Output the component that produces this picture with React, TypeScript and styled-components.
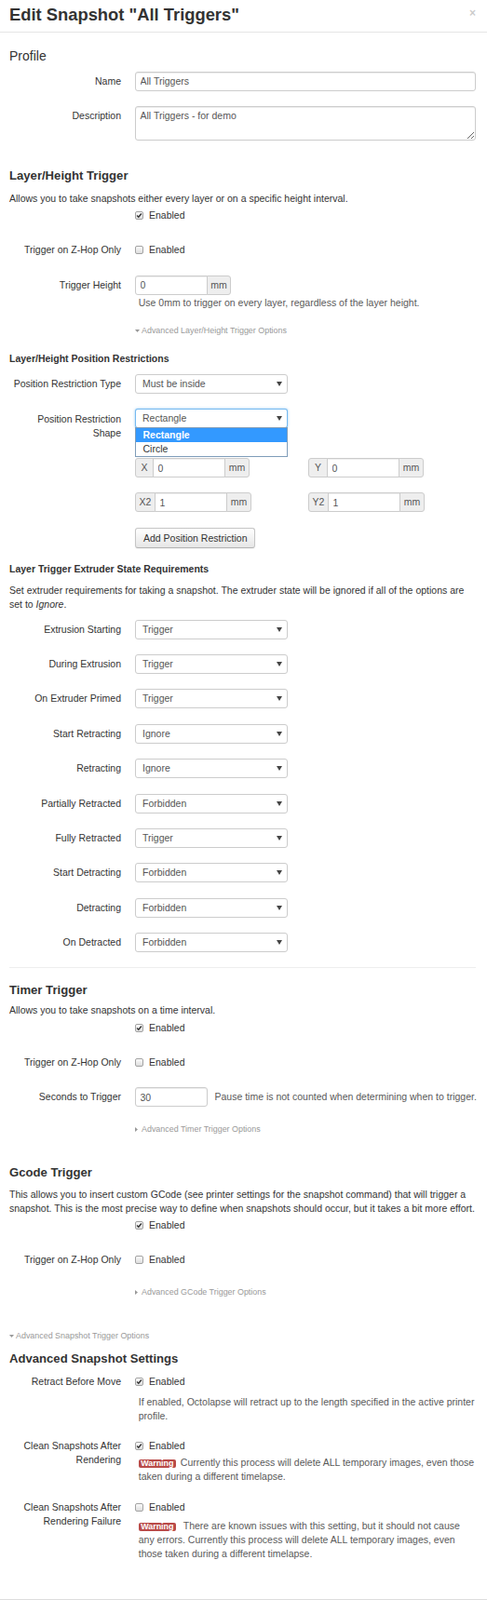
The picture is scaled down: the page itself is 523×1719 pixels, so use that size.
import React from "react";
import styled, { createGlobalStyle } from "styled-components";

const GlobalStyle = createGlobalStyle`
  html, body { margin: 0; padding: 0; background: #fff; }
  body {
    font-family: "Liberation Sans", Arial, Helvetica, sans-serif;
    font-size: 10.5px;
    line-height: 15px;
    color: #333;
  }
  * { box-sizing: border-box; }
`;

type MT = { $mt?: number };

const Modal = styled.div`
  width: 523px;
  background: #fff;
`;

const Header = styled.div`
  display: flex;
  align-items: flex-start;
  justify-content: space-between;
  padding: 4.75px 12px 6.75px 10px;
  border-bottom: 1px solid #e5e5e5;
`;

const Title = styled.h3`
  margin: 0;
  font-size: 18.375px;
  line-height: 22.5px;
  font-weight: bold;
  color: #333;
`;

const Close = styled.span`
  font-size: 12px;
  font-weight: bold;
  line-height: 18px;
  color: #000;
  opacity: 0.2;
`;

const Body = styled.div`
  display: flex;
  flex-direction: column;
  padding: 0 12px 41.2px 10px;
`;

const Footer = styled.div`
  height: 40px;
  border-top: 1px solid #ddd;
  background: #f5f5f5;
`;

const SectionTitle = styled.h4<MT & { $plain?: boolean }>`
  margin: ${(p) => p.$mt ?? 0}px 0 0;
  font-size: ${(p) => (p.$plain ? 14 : 13.125)}px;
  font-weight: ${(p) => (p.$plain ? "normal" : "bold")};
  line-height: 15px;
  color: #333;
`;

const SubTitle = styled.h5<MT>`
  margin: ${(p) => p.$mt ?? 0}px 0 0;
  font-size: 10.5px;
  font-weight: bold;
  line-height: 15px;
  color: #333;
`;

const Para = styled.p<MT>`
  margin: ${(p) => p.$mt ?? 0}px 0 0;
  white-space: nowrap;
`;

const Rule = styled.hr<MT>`
  margin: ${(p) => p.$mt ?? 0}px 0 0;
  border: 0;
  border-top: 1px solid #eee;
  height: 0;
`;

const Row = styled.div<MT>`
  display: flex;
  align-items: flex-start;
  margin-top: ${(p) => p.$mt ?? 0}px;
`;

const Label = styled.label<{ $pt?: number }>`
  width: 120px;
  flex-shrink: 0;
  text-align: right;
  padding-top: ${(p) => p.$pt ?? 0}px;
  color: #333;
`;

const Controls = styled.div<{ $inline?: boolean }>`
  margin-left: 15px;
  flex: 1;
  min-width: 0;
  display: ${(p) => (p.$inline ? "flex" : "block")};
  align-items: center;
`;

const Field = styled.input<{ $w?: string; $radius?: string }>`
  display: block;
  width: ${(p) => p.$w ?? "100%"};
  height: 21px;
  padding: 0 4.5px;
  margin: 0;
  font: inherit;
  color: #555;
  background: #fff;
  border: 1px solid #ccc;
  border-radius: ${(p) => p.$radius ?? "3px"};
  box-shadow: inset 0 1px 1px rgba(0, 0, 0, 0.075);
  outline: none;
`;

const Area = styled.textarea`
  display: block;
  width: 100%;
  height: 37px;
  padding: 2px 4.5px;
  margin: 0;
  font: inherit;
  line-height: 15px;
  color: #555;
  border: 1px solid #ccc;
  border-radius: 3px;
  box-shadow: inset 0 1px 1px rgba(0, 0, 0, 0.075);
  outline: none;
`;

const Group = styled.div`
  display: flex;
  width: max-content;
`;

const Addon = styled.span<{ $w: number; $side: "left" | "right" }>`
  position: relative;
  z-index: 1;
  width: ${(p) => p.$w}px;
  height: 21px;
  line-height: 19px;
  text-align: center;
  color: #555;
  background: #eee;
  border: 1px solid #ccc;
  border-radius: ${(p) => (p.$side === "left" ? "3px 0 0 3px" : "0 3px 3px 0")};
  ${(p) => (p.$side === "left" ? "margin-right: -1px;" : "margin-left: -1px;")}
`;

const PairGrid = styled.div`
  display: grid;
  grid-template-columns: 186px auto;
`;

const SelectBox = styled.div<{ $focus?: boolean }>`
  position: relative;
  width: 164px;
  height: 21px;
  display: flex;
  align-items: center;
  justify-content: space-between;
  padding: 0 5px 0 7px;
  color: #555;
  background: #fff;
  border: 1px solid ${(p) => (p.$focus ? "rgba(82,168,236,0.8)" : "#ccc")};
  border-radius: 3px;
  box-shadow: ${(p) => (p.$focus ? "0 0 3px rgba(82,168,236,0.6)" : "none")};
`;

const DropList = styled.ul`
  position: absolute;
  top: calc(100% + 0px);
  left: -1px;
  width: 164px;
  margin: 0;
  padding: 0;
  list-style: none;
  background: #fff;
  border: 1px solid #7f9db9;
  z-index: 5;
`;

const DropItem = styled.li<{ $active?: boolean }>`
  height: 14.6px;
  line-height: 14.6px;
  padding-left: 7.5px;
  font-size: 10.5px;
  font-weight: ${(p) => (p.$active ? "bold" : "normal")};
  color: ${(p) => (p.$active ? "#fff" : "#333")};
  background: ${(p) => (p.$active ? "#3399ff" : "#fff")};
`;

const CheckLine = styled.div`
  display: flex;
  align-items: center;
  height: 15px;
  gap: 6px;
  color: #333;
`;

const Box = styled.span`
  display: inline-flex;
  align-items: center;
  justify-content: center;
  width: 9px;
  height: 9px;
  border: 1px solid #a3a3a3;
  border-radius: 2px;
  background: linear-gradient(#fafafa, #dedede);
`;

const Help = styled.div<MT & { $nowrap?: boolean }>`
  margin-top: ${(p) => p.$mt ?? 0}px;
  padding-left: 3.75px;
  color: #595959;
  white-space: nowrap;
`;

const HelpInline = styled.span`
  margin-left: 7.5px;
  color: #595959;
  white-space: nowrap;
`;

const Warn = styled.span`
  display: inline-block;
  background: #b94a48;
  color: #fff;
  font-weight: bold;
  font-size: 8.9px;
  line-height: 9.5px;
  padding: 0 2.5px;
  border-radius: 2px;
  margin-right: 2px;
`;

const Toggle = styled.div<MT & { $indent?: boolean }>`
  display: flex;
  align-items: center;
  height: 15px;
  margin-top: ${(p) => p.$mt ?? 0}px;
  margin-left: ${(p) => (p.$indent ? 135 : 0)}px;
  font-size: 8.925px;
  color: #999;
  svg {
    margin-right: 2px;
  }
`;

const Button = styled.button`
  display: block;
  height: 21.5px;
  padding: 0 8px;
  margin: 0;
  font: inherit;
  color: #333;
  background: linear-gradient(#ffffff, #e6e6e6);
  border: 1px solid #c5c5c5;
  border-bottom-color: #b3b3b3;
  border-radius: 3px;
  box-shadow: inset 0 1px 0 rgba(255, 255, 255, 0.2), 0 1px 2px rgba(0, 0, 0, 0.05);
`;

const Arrow = () => (
  <svg width="6" height="5" viewBox="0 0 6 5">
    <polygon points="0,0 6,0 3,5" fill="#444" />
  </svg>
);

const Select = ({ value, focus, children }: { value: string; focus?: boolean; children?: React.ReactNode }) => (
  <SelectBox $focus={focus}>
    <span>{value}</span>
    <Arrow />
    {children}
  </SelectBox>
);

const Checkbox = ({ on }: { on?: boolean }) => (
  <CheckLine>
    <Box>
      {on && (
        <svg width="7" height="7" viewBox="0 0 7 7">
          <path d="M1.1 3.6 L2.8 5.3 L5.9 1.5" fill="none" stroke="#333" strokeWidth="1.4" />
        </svg>
      )}
    </Box>
    <span>Enabled</span>
  </CheckLine>
);

const AdvToggle = ({ open, text, indent, mt }: { open?: boolean; text: string; indent?: boolean; mt: number }) => (
  <Toggle $mt={mt} $indent={indent}>
    {open ? (
      <svg width="5" height="3" viewBox="0 0 5 3">
        <polygon points="0,0 5,0 2.5,3" fill="#999" />
      </svg>
    ) : (
      <svg width="5" height="5" viewBox="0 0 5 5">
        <polygon points="0,0 3,2.5 0,5" fill="#999" />
      </svg>
    )}
    <span>{text}</span>
  </Toggle>
);

const extruder: [string, string][] = [
  ["Extrusion Starting", "Trigger"],
  ["During Extrusion", "Trigger"],
  ["On Extruder Primed", "Trigger"],
  ["Start Retracting", "Ignore"],
  ["Retracting", "Ignore"],
  ["Partially Retracted", "Forbidden"],
  ["Fully Retracted", "Trigger"],
  ["Start Detracting", "Forbidden"],
  ["Detracting", "Forbidden"],
  ["On Detracted", "Forbidden"],
];

const CoordGroup = ({ axis, value, w }: { axis: string; value: string; w: number }) => (
  <Group>
    <Addon $w={w} $side="left">{axis}</Addon>
    <Field $w="78px" $radius="0" defaultValue={value} />
    <Addon $w={27} $side="right">mm</Addon>
  </Group>
);

export default function App() {
  return (
    <Modal>
      <GlobalStyle />
      <Header>
        <Title>Edit Snapshot "All Triggers"</Title>
        <Close>×</Close>
      </Header>
      <Body>
        <SectionTitle $plain $mt={17.5}>Profile</SectionTitle>
        <Row $mt={9}>
          <Label $pt={3}>Name</Label>
          <Controls>
            <Field defaultValue="All Triggers" />
          </Controls>
        </Row>
        <Row $mt={16}>
          <Label $pt={3}>Description</Label>
          <Controls>
            <Area defaultValue="All Triggers - for demo" />
          </Controls>
        </Row>

        <SectionTitle $mt={30}>Layer/Height Trigger</SectionTitle>
        <Para $mt={10}>Allows you to take snapshots either every layer or on a specific height interval.</Para>
        <Row $mt={3.7}>
          <Label />
          <Controls>
            <Checkbox on />
          </Controls>
        </Row>
        <Row $mt={21.6}>
          <Label>Trigger on Z-Hop Only</Label>
          <Controls>
            <Checkbox />
          </Controls>
        </Row>
        <Row $mt={20.2}>
          <Label $pt={3}>Trigger Height</Label>
          <Controls>
            <Group>
              <Field $w="78px" $radius="3px 0 0 3px" defaultValue="0" />
              <Addon $w={26} $side="right">mm</Addon>
            </Group>
            <Help $mt={1.2}>Use 0mm to trigger on every layer, regardless of the layer height.</Help>
          </Controls>
        </Row>
        <AdvToggle open indent mt={15} text="Advanced Layer/Height Trigger Options" />

        <SubTitle $mt={15.3}>Layer/Height Position Restrictions</SubTitle>
        <Row $mt={9}>
          <Label $pt={3}>Position Restriction Type</Label>
          <Controls>
            <Select value="Must be inside" />
          </Controls>
        </Row>
        <Row $mt={16}>
          <Label $pt={3.75}>
            Position Restriction
            <br />
            Shape
          </Label>
          <Controls>
            <Select value="Rectangle" focus>
              <DropList>
                <DropItem $active>Rectangle</DropItem>
                <DropItem>Circle</DropItem>
              </DropList>
            </Select>
          </Controls>
        </Row>
        <Row $mt={19.25}>
          <Label />
          <Controls>
            <PairGrid>
              <CoordGroup axis="X" value="0" w={20} />
              <CoordGroup axis="Y" value="0" w={21} />
            </PairGrid>
          </Controls>
        </Row>
        <Row $mt={16}>
          <Label />
          <Controls>
            <PairGrid>
              <CoordGroup axis="X2" value="1" w={22} />
              <CoordGroup axis="Y2" value="1" w={22} />
            </PairGrid>
          </Controls>
        </Row>
        <Row $mt={17}>
          <Label />
          <Controls>
            <Button type="button">Add Position Restriction</Button>
          </Controls>
        </Row>

        <SubTitle $mt={15.2}>Layer Trigger Extruder State Requirements</SubTitle>
        <Para $mt={7.6}>
          Set extruder requirements for taking a snapshot. The extruder state will be ignored if all of the options are
          <br />
          set to <em>Ignore</em>.
        </Para>
        {extruder.map(([label, value], i) => (
          <Row key={label} $mt={i === 0 ? 8.9 : 16.4}>
            <Label $pt={3}>{label}</Label>
            <Controls>
              <Select value={value} />
            </Controls>
          </Row>
        ))}

        <Rule $mt={15.7} />

        <SectionTitle $mt={15.8}>Timer Trigger</SectionTitle>
        <Para $mt={7.7}>Allows you to take snapshots on a time interval.</Para>
        <Row $mt={3.3}>
          <Label />
          <Controls>
            <Checkbox on />
          </Controls>
        </Row>
        <Row $mt={22.7}>
          <Label>Trigger on Z-Hop Only</Label>
          <Controls>
            <Checkbox />
          </Controls>
        </Row>
        <Row $mt={19}>
          <Label $pt={3}>Seconds to Trigger</Label>
          <Controls $inline>
            <Field $w="78px" defaultValue="30" />
            <HelpInline>Pause time is not counted when determining when to trigger.</HelpInline>
          </Controls>
        </Row>
        <AdvToggle indent mt={16.3} text="Advanced Timer Trigger Options" />

        <SectionTitle $mt={31.7}>Gcode Trigger</SectionTitle>
        <Para $mt={8.3}>
          This allows you to insert custom GCode (see printer settings for the snapshot command) that will trigger a
          <br />
          snapshot. This is the most precise way to define when snapshots should occur, but it takes a bit more effort.
        </Para>
        <Row $mt={3.4}>
          <Label />
          <Controls>
            <Checkbox on />
          </Controls>
        </Row>
        <Row $mt={22.3}>
          <Label>Trigger on Z-Hop Only</Label>
          <Controls>
            <Checkbox />
          </Controls>
        </Row>
        <AdvToggle indent mt={20} text="Advanced GCode Trigger Options" />

        <AdvToggle open mt={32} text="Advanced Snapshot Trigger Options" />
        <SectionTitle $mt={9}>Advanced Snapshot Settings</SectionTitle>
        <Row $mt={10}>
          <Label>Retract Before Move</Label>
          <Controls>
            <Checkbox on />
            <Help $mt={6.7}>
              If enabled, Octolapse will retract up to the length specified in the active printer
              <br />
              profile.
            </Help>
          </Controls>
        </Row>
        <Row $mt={16.6}>
          <Label>
            Clean Snapshots After
            <br />
            Rendering
          </Label>
          <Controls>
            <Checkbox on />
            <Help $mt={3.4}>
              <Warn>Warning</Warn> Currently this process will delete ALL temporary images, even those
              <br />
              taken during a different timelapse.
            </Help>
          </Controls>
        </Row>
        <Row $mt={18.3}>
          <Label>
            Clean Snapshots After
            <br />
            Rendering Failure
          </Label>
          <Controls>
            <Checkbox />
            <Help $mt={4.3}>
              <Warn>Warning</Warn> {"\u00a0"}There are known issues with this setting, but it should not cause
              <br />
              any errors. Currently this process will delete ALL temporary images, even
              <br />
              those taken during a different timelapse.
            </Help>
          </Controls>
        </Row>
      </Body>
      <Footer />
    </Modal>
  );
}
